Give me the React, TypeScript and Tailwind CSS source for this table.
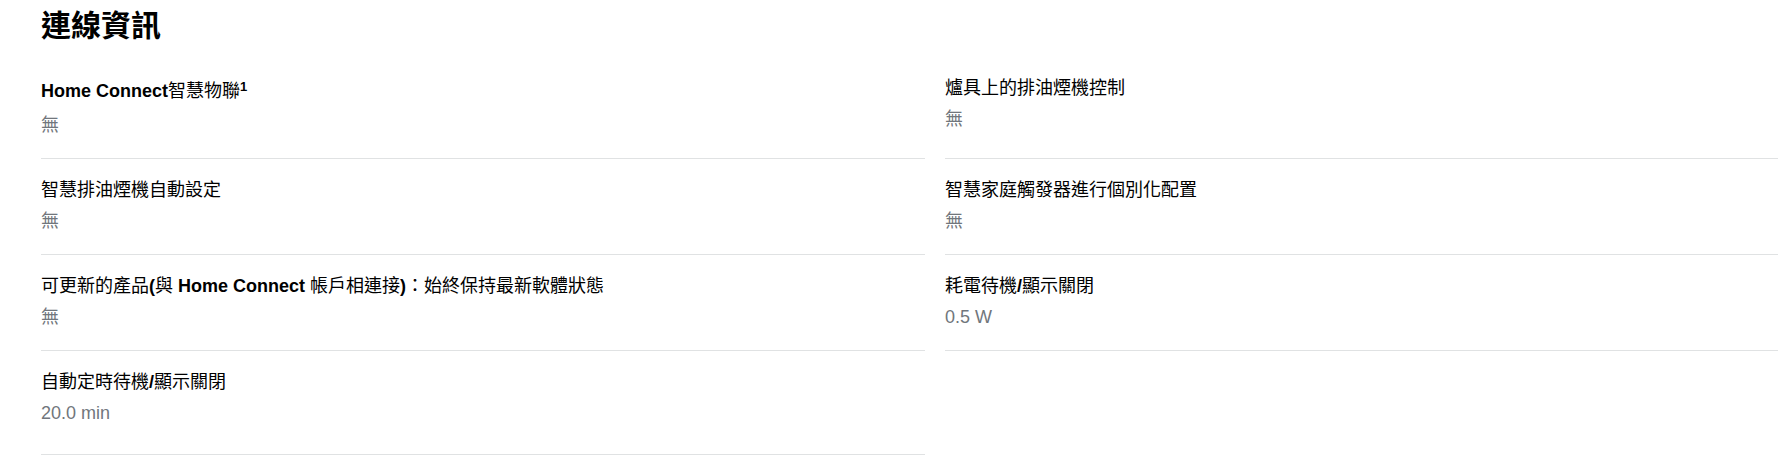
import type { ReactNode } from "react"

interface SpecRowProps {
  label: string
  sup?: string
  value: string
  last?: boolean
  tall?: boolean
}

// latin runs are bold, cjk runs stay regular like the reference
function Label({ text }: { text: string }) {
  const parts = text.split(/([\u0000-\u00ff]+)/).filter(Boolean)
  return (
    <>
      {parts.map((p, i) =>
        /^[\u0000-\u00ff]+$/.test(p) ? (
          <span key={i} className="font-bold">{p}</span>
        ) : (
          <span key={i} className="font-normal">{p}</span>
        )
      )}
    </>
  )
}

function SpecRow({ label, sup, value, last, tall }: SpecRowProps) {
  return (
    <div className={`border-b border-[#e0e2e3] pt-[18px] ${last ? "pb-[28px]" : "pb-[20px]"}`}>
      <div className={`text-[18px] text-black ${tall ? "leading-[32px]" : "leading-[26px]"}`}>
        <Label text={label} />
        {sup && <sup className="font-bold text-[13px]">{sup}</sup>}
      </div>
      <div className="mt-[5px] text-[18px] leading-[26px] text-[#71767c]">{value}</div>
    </div>
  )
}

const left: SpecRowProps[] = [
  { label: "Home Connect智慧物聯", sup: "1", value: "無", tall: true },
  { label: "智慧排油煙機自動設定", value: "無" },
  { label: "可更新的產品(與 Home Connect 帳戶相連接)：始終保持最新軟體狀態", value: "無" },
  { label: "自動定時待機/顯示關閉", value: "20.0 min", last: true },
]

const right: SpecRowProps[] = [
  { label: "爐具上的排油煙機控制", value: "無" },
  { label: "智慧家庭觸發器進行個別化配置", value: "無" },
  { label: "耗電待機/顯示關閉", value: "0.5 W" },
]

export default function App(): ReactNode {
  const rows = left.map((l, i) => [l, right[i]] as const)
  return (
    <div
      className="h-[470px] w-full overflow-hidden bg-white pl-[41px] pt-[8px]"
      style={{ fontFamily: '"Liberation Sans", Arial, "Noto Sans CJK TC", sans-serif' }}
    >
      <h2 className="mb-[13px] text-[30px] font-bold leading-[36px] text-black">連線資訊</h2>
      <div className="grid w-[1788px] grid-cols-[884px_884px] gap-x-[20px]">
        {rows.map(([l, r], i) => (
          <div key={i} className="contents">
            <SpecRow {...l} />
            {r ? <SpecRow {...r} /> : <div />}
          </div>
        ))}
      </div>
    </div>
  )
}
